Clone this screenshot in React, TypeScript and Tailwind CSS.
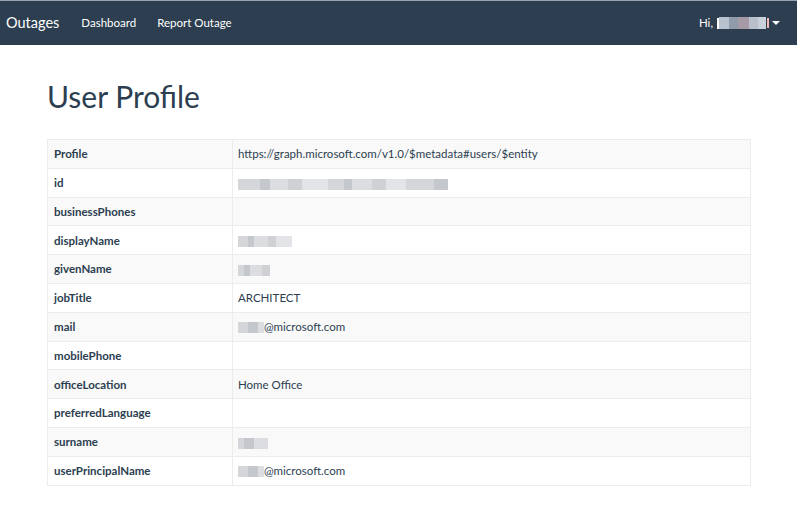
const rows: { label: string; value?: string; blur?: number[]; suffix?: string }[] = [
  { label: "Profile", value: "https://graph.microsoft.com/v1.0/$metadata#users/$entity" },
  { label: "id", blur: [22, 10, 18, 14, 26, 16, 8, 20, 14, 20, 28, 14] },
  { label: "businessPhones" },
  { label: "displayName", blur: [10, 6, 14, 8, 16] },
  { label: "givenName", blur: [6, 6, 12, 8] },
  { label: "jobTitle", value: "ARCHITECT" },
  { label: "mail", blur: [10, 10, 6], suffix: "@microsoft.com" },
  { label: "mobilePhone" },
  { label: "officeLocation", value: "Home Office" },
  { label: "preferredLanguage" },
  { label: "surname", blur: [6, 10, 14] },
  { label: "userPrincipalName", blur: [10, 10, 6], suffix: "@microsoft.com" },
];

const shades = ["bg-[#d4d6da]", "bg-[#c4c7cc]", "bg-[#dcdde0]", "bg-[#cfd1d5]", "bg-[#e2e4e7]"];

function Blur({ widths }: { widths: number[] }) {
  return (
    <span className="inline-flex h-[11px] items-stretch align-middle">
      {widths.map((w, i) => (
        <span key={i} className={shades[i % shades.length]} style={{ width: w }} />
      ))}
    </span>
  );
}

export default function App() {
  return (
    <div className="min-h-[517px] bg-white font-['Lato','Liberation_Sans',sans-serif] text-[11.5px] text-[#2c3e50]">
      <nav className="flex h-[45px] items-center justify-between border-t border-[#9aa3ad] bg-[#2c3e50] pl-[6px] pr-[17px] text-white">
        <div className="flex items-center">
          <span className="text-[14.5px]">Outages</span>
          <span className="ml-[22px]">Dashboard</span>
          <span className="ml-[21px]">Report Outage</span>
        </div>
        <div className="flex items-center">
          <span>Hi,</span>
          <span className="ml-[4px] h-[11px] w-[2px] bg-white" />
          <span className="inline-flex h-[12px] items-stretch">
            <span className="w-[10px] bg-[#b8c2cf]" />
            <span className="w-[9px] bg-[#8f9bab]" />
            <span className="w-[11px] bg-[#a69aa6]" />
            <span className="w-[9px] bg-[#b7c0cc]" />
            <span className="w-[8px] bg-[#c9d0d9]" />
          </span>
          <span className="ml-[1px] h-[10px] w-[2px] bg-[#f3b6b6]" />
          <span className="ml-[3px] inline-block h-0 w-0 border-x-[4px] border-t-[4px] border-x-transparent border-t-white" />
        </div>
      </nav>

      <main className="px-[47px] pr-[46px]">
        <h1 className="mt-[31px] text-[30px] leading-[40px] text-[#2c3e50]">User Profile</h1>

        <table className="mt-[23px] w-full border-collapse border border-[#ececec]">
          <tbody>
            {rows.map((r, i) => (
              <tr key={r.label} className={i % 2 === 0 ? "bg-[#f9f9f9]" : "bg-white"}>
                <td className="h-[28.8px] w-[185px] border border-[#ececec] px-[6px] font-bold">{r.label}</td>
                <td className="h-[28.8px] border border-[#ececec] px-[5px]">
                  {r.value}
                  {r.blur && <Blur widths={r.blur} />}
                  {r.suffix && <span className="align-middle">{r.suffix}</span>}
                </td>
              </tr>
            ))}
          </tbody>
        </table>
      </main>
    </div>
  );
}
